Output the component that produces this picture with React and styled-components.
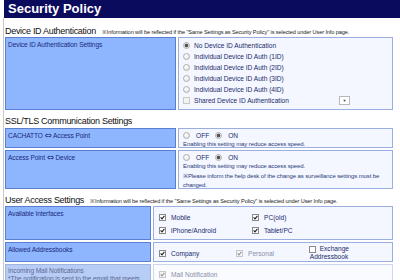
import styled, { createGlobalStyle } from 'styled-components';

const GlobalStyle = createGlobalStyle`
  html, body {
    margin: 0;
    padding: 0;
    background: #fff;
  }
  body {
    font-family: "Liberation Sans", Arial, sans-serif;
    color: #1b2a6b;
    width: 400px;
    height: 280px;
    overflow: hidden;
  }
`;

const Page = styled.div`
  width: 400px;
`;

const Header = styled.div`
  height: 18px;
  margin-left: 4px;
  background: #0b0b5e;
  color: #fff;
  font-weight: bold;
  font-size: 13px;
  line-height: 18px;
  padding-left: 4px;
`;

const Body = styled.div`
  margin-left: 3px;
  border-left: 1px solid #c8c8c8;
  padding: 0 7px 0 1px;
`;

const SectionTitle = styled.div`
  display: flex;
  align-items: baseline;
  gap: 6px;
  height: ${p => p.h || 19}px;
  padding-top: ${p => p.pt || 6}px;
  box-sizing: border-box;
  color: #111;
  font-size: 9px;
  letter-spacing: -0.3px;
  white-space: nowrap;
`;

const Note = styled.span`
  font-size: 5.6px;
  letter-spacing: -0.1px;
  color: #222;
`;

const Arrow = styled.span`
  font-family: "DejaVu Sans", sans-serif;
  font-size: 8.5px;
  line-height: 8px;
`;

const Table = styled.div`
  display: grid;
  grid-template-columns: ${p => p.left}px 1fr;
  gap: 2px;
`;

const LabelCell = styled.div`
  background: ${p => (p.disabled ? '#b8cdf6' : '#8db6ff')};
  border: 1px solid ${p => (p.disabled ? '#9fb5e0' : '#5a7fd0')};
  height: ${p => p.h}px;
  box-sizing: border-box;
  padding: 2px 2px;
  font-size: 6.6px;
  line-height: ${p => (p.disabled ? 8 : 9)}px;
  color: ${p => (p.disabled ? '#5b6a92' : '#1b2a7b')};
  letter-spacing: -0.1px;
`;

const ValueCell = styled.div`
  background: ${p => (p.disabled ? '#fafbff' : '#f4f7ff')};
  border: 1px solid ${p => (p.disabled ? '#ccd6ee' : '#9aaee0')};
  height: ${p => p.h}px;
  box-sizing: border-box;
  padding: ${p => p.pad || '3px 4px'};
  font-size: 6.6px;
  color: ${p => (p.disabled ? '#8a8fa8' : '#1b2a6b')};
`;

const OptionList = styled.div`
  display: flex;
  flex-direction: column;
`;

const Option = styled.label`
  display: flex;
  align-items: center;
  gap: 4px;
  height: 11px;
  white-space: nowrap;
`;

const Radio = styled.span`
  display: inline-block;
  width: 7px;
  height: 7px;
  border-radius: 50%;
  border: 1px solid #b0b0b0;
  background: ${p =>
    p.checked
      ? 'radial-gradient(circle, #555 0 1.6px, #eee 2.2px)'
      : 'radial-gradient(circle at 40% 35%, #fff, #ddd)'};
  box-sizing: border-box;
  flex: none;
`;

const BoxWrap = styled.span`
  display: inline-flex;
  width: 7px;
  height: 7px;
  border: 1px solid ${p => (p.faded ? '#c8c8c8' : '#8a8a8a')};
  background: ${p => (p.faded ? '#f4f4f4' : '#fff')};
  box-sizing: border-box;
  flex: none;
  align-items: center;
  justify-content: center;
  vertical-align: middle;
`;

const Checkbox = ({ checked, faded }) => (
  <BoxWrap faded={faded}>
    {checked && (
      <svg width="5" height="5" viewBox="0 0 5 5">
        <path d="M0.6 2.4 L2 3.9 L4.4 0.8" stroke={faded ? '#999' : '#222'} strokeWidth="1.1" fill="none" />
      </svg>
    )}
  </BoxWrap>
);

const SelectButton = styled.span`
  margin-left: auto;
  margin-right: 38px;
  width: 9px;
  height: 7px;
  border: 1px solid #b8b8b8;
  background: #fff;
  font-size: 4px;
  line-height: 7px;
  text-align: center;
  color: #444;
`;

const InlineRow = styled.div`
  display: flex;
  align-items: center;
  gap: 6px;
  height: 10px;
  white-space: nowrap;
`;

const Hint = styled.div`
  font-size: 6px;
  line-height: 9.5px;
  letter-spacing: -0.1px;
  color: #2a3a7a;
`;

const CheckGrid = styled.div`
  display: grid;
  grid-template-columns: ${p => p.cols};
  row-gap: 3px;
  padding-top: 2px;
`;

const CheckItem = styled.div`
  display: flex;
  align-items: center;
  gap: 5px;
  height: ${p => p.h || 10}px;
  color: ${p => (p.faded ? '#8a8fa8' : '#1b2a6b')};
  white-space: nowrap;
`;

const Stack = styled.div`
  text-align: center;
  line-height: 8px;
  margin-top: -1px;
  white-space: nowrap;
`;

export default function App() {
  return (
    <Page>
      <GlobalStyle />
      <Header>Security Policy</Header>
      <Body>
        <SectionTitle h={19} pt={8}>
          Device ID Authentication
          <Note>※Information will be reflected if the "Same Settings as Security Policy" is selected under User Info page.</Note>
        </SectionTitle>
        <Table left={171}>
          <LabelCell h={73}>Device ID Authentication Settings</LabelCell>
          <ValueCell h={73} pad="2px 4px">
            <OptionList>
              <Option><Radio checked />No Device ID Authentication</Option>
              <Option><Radio />Individual Device ID Auth (1ID)</Option>
              <Option><Radio />Individual Device ID Auth (2ID)</Option>
              <Option><Radio />Individual Device ID Auth (3ID)</Option>
              <Option><Radio />Individual Device ID Auth (4ID)</Option>
              <Option>
                <Checkbox faded />Shared Device ID Authentication
                <SelectButton>▼</SelectButton>
              </Option>
            </OptionList>
          </ValueCell>
        </Table>

        <SectionTitle h={18} pt={6}>SSL/TLS Communication Settings</SectionTitle>
        <Table left={171}>
          <LabelCell h={20}>CACHATTO <Arrow>⇔</Arrow> Access Point</LabelCell>
          <ValueCell h={20} pad="1px 4px">
            <InlineRow><Radio />OFF<Radio checked />ON</InlineRow>
            <Hint>Enabling this setting may reduce access speed.</Hint>
          </ValueCell>
          <LabelCell h={39}>Access Point <Arrow>⇔</Arrow> Device</LabelCell>
          <ValueCell h={39} pad="1px 4px">
            <InlineRow><Radio />OFF<Radio checked />ON</InlineRow>
            <Hint>Enabling this setting may reduce access speed.</Hint>
            <Hint>※Please inform the help desk of the change as surveillance settings must be changed.</Hint>
          </ValueCell>
        </Table>

        <SectionTitle h={17} pt={6}>
          User Access Settings
          <Note>※Information will be reflected if the "Same Settings as Security Policy" is selected under User Info page.</Note>
        </SectionTitle>
        <Table left={146}>
          <LabelCell h={34}>Available Interfaces</LabelCell>
          <ValueCell h={34} pad="3px 5px">
            <CheckGrid cols="93px 1fr">
              <CheckItem><Checkbox checked />Mobile</CheckItem>
              <CheckItem><Checkbox checked />PC(old)</CheckItem>
              <CheckItem><Checkbox checked />iPhone/Android</CheckItem>
              <CheckItem><Checkbox checked />Tablet/PC</CheckItem>
            </CheckGrid>
          </ValueCell>
          <LabelCell h={20}>Allowed Addressbooks</LabelCell>
          <ValueCell h={20} pad="1px 5px">
            <CheckGrid cols="77px 73px 40px">
              <CheckItem h={15}><Checkbox checked />Company</CheckItem>
              <CheckItem h={15} faded><Checkbox checked faded />Personal</CheckItem>
              <Stack><Checkbox /> &nbsp;Exchange<br />Addressbook</Stack>
            </CheckGrid>
          </ValueCell>
          <LabelCell h={22} disabled>
            Incoming Mail Notifications
            <div>*The notification is sent to the email that meets</div>
          </LabelCell>
          <ValueCell h={22} disabled pad="4px 5px">
            <CheckItem faded><Checkbox checked faded />Mail Notification</CheckItem>
          </ValueCell>
        </Table>
      </Body>
    </Page>
  );
}
